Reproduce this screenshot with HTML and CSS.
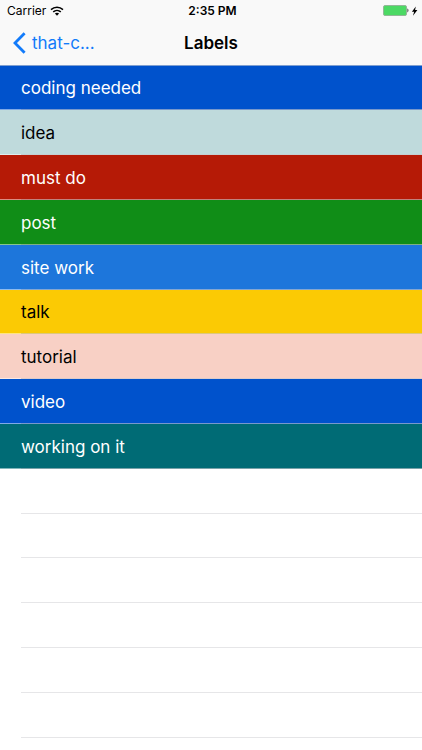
FILE: index.html
```html
<!DOCTYPE html>
<html lang="en">
<head>
<meta charset="utf-8">
<meta name="viewport" content="width=device-width, initial-scale=1">
<title>Labels</title>
<link rel="stylesheet" href="styles.css">
</head>
<body>
<header class="top">
  <div class="status">
    <div class="carrier">
      <span>Carrier</span>
      <svg class="wifi" viewBox="0 0 14 10" aria-hidden="true">
        <path d="M1 3.6C4.4.4 9.6.4 13 3.6M3.2 5.9c2.2-2 5.4-2 7.6 0" fill="none" stroke="#000" stroke-width="1.5"/>
        <path d="M4.9 7.5c1.2-1.1 3-1.1 4.2 0L7 9.7z"/>
      </svg>
    </div>
    <span class="time">2:35 PM</span>
    <div class="power">
      <svg class="battery" viewBox="0 0 26 11" aria-hidden="true">
        <rect x=".5" y=".5" width="23" height="10" rx="1.5" fill="#4cd964" stroke="#93b797"/>
        <path d="M24.3 3.6c1.6.3 1.6 3.5 0 3.8z" fill="#555"/>
      </svg>
      <svg class="bolt" viewBox="0 0 7 10" aria-hidden="true"><path d="M4.8.5.9 5.7h2.2L2 9.7l4.4-5.6H4.1z"/></svg>
    </div>
  </div>
  <nav class="nav">
    <a class="back" href="#">
      <svg class="chevron" viewBox="0 0 13 22" aria-hidden="true"><path d="M11.6 1.3 2 11l9.6 9.7" fill="none" stroke="currentColor" stroke-width="2.8"/></svg>
      <span>that-c...</span>
    </a>
    <h1 class="title">Labels</h1>
  </nav>
</header>
<main>
  <ul class="list">
    <li class="row blue">coding needed</li>
    <li class="row mist">idea</li>
    <li class="row red">must do</li>
    <li class="row green">post</li>
    <li class="row sky">site work</li>
    <li class="row yellow">talk</li>
    <li class="row blush">tutorial</li>
    <li class="row blue">video</li>
    <li class="row teal">working on it</li>
    <li class="row empty"></li>
    <li class="row empty"></li>
    <li class="row empty"></li>
    <li class="row empty"></li>
    <li class="row empty"></li>
    <li class="row empty"></li>
  </ul>
</main>
</body>
</html>
```
FILE: styles.css
```css
* { box-sizing: border-box; }
body {
  margin: 0;
  background: #fff;
  color: #000;
  font-family: Inter, "Liberation Sans", sans-serif;
}
.top {
  background: #f9f9f9;
  border-bottom: 1px solid #7f9fd0;
}
.status {
  display: grid;
  grid-template-columns: 1fr auto 1fr;
  align-items: center;
  height: 21px;
  padding: 0 4px 0 7px;
  font-size: 12px;
}
.carrier, .power { display: flex; align-items: center; }
.carrier { gap: 4px; }
.power { justify-content: flex-end; gap: 2px; }
.time { font-weight: 600; }
.wifi { width: 14px; height: 10px; }
.battery { width: 26px; height: 11px; }
.bolt { width: 7px; height: 10px; }
.nav {
  display: grid;
  grid-template-columns: 1fr auto 1fr;
  align-items: center;
  height: 44px;
  padding: 0 13px;
}
.back {
  display: flex;
  align-items: center;
  gap: 6px;
  color: #127bfa;
  font-size: 17px;
  text-decoration: none;
}
.chevron { width: 13px; height: 22px; }
.title { margin: 0; font-size: 17px; font-weight: 600; }
.list { margin: 0; padding: 0; list-style: none; }
.row {
  display: flex;
  align-items: center;
  height: 45px;
  padding: 0 21px;
  font-size: 17px;
  background-image: linear-gradient(to right, rgb(255 255 255 / 50%) 21px, rgb(200 199 204 / 60%) 21px);
  background-position: bottom;
  background-size: 100% 1px;
  background-repeat: no-repeat;
}
.row:nth-child(5n + 1) { height: 44px; }
.blue { background-color: #0052cc; color: #fff; }
.mist { background-color: #bfdadc; }
.red { background-color: #b51a06; color: #fff; }
.green { background-color: #108d17; color: #fff; }
.sky { background-color: #1d76db; color: #fff; }
.yellow { background-color: #fbca04; }
.blush { background-color: #f8d0c5; }
.teal { background-color: #006b75; color: #fff; }
.empty { background-image: linear-gradient(to right, transparent 21px, #e6e6e8 21px); }
```
